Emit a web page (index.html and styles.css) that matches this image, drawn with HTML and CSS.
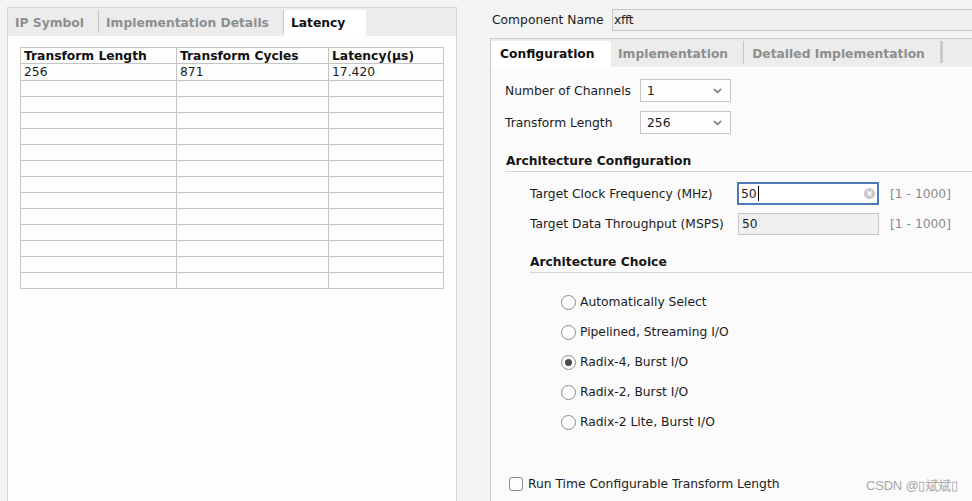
FILE: index.html
```html
<!DOCTYPE html>
<html>
<head>
<meta charset="utf-8">
<link rel="stylesheet" href="styles.css">
</head>
<body>
<div class="app">
  <section class="left-panel">
    <div class="tabbar">
      <div class="tab">IP Symbol</div><div class="sep"></div>
      <div class="tab">Implementation Details</div><div class="sep"></div>
      <div class="tab active">Latency</div>
    </div>
    <div class="left-content">
      <table class="latency">
        <colgroup><col class="c1"><col class="c2"><col class="c3"></colgroup>
        <thead>
          <tr><th>Transform Length</th><th>Transform Cycles</th><th>Latency(µs)</th></tr>
        </thead>
        <tbody>
          <tr class="data"><td>256</td><td>871</td><td>17.420</td></tr>
          <tr><td></td><td></td><td></td></tr>
          <tr><td></td><td></td><td></td></tr>
          <tr><td></td><td></td><td></td></tr>
          <tr><td></td><td></td><td></td></tr>
          <tr><td></td><td></td><td></td></tr>
          <tr><td></td><td></td><td></td></tr>
          <tr><td></td><td></td><td></td></tr>
          <tr><td></td><td></td><td></td></tr>
          <tr><td></td><td></td><td></td></tr>
          <tr><td></td><td></td><td></td></tr>
          <tr><td></td><td></td><td></td></tr>
          <tr><td></td><td></td><td></td></tr>
          <tr><td></td><td></td><td></td></tr>
        </tbody>
      </table>
    </div>
  </section>

  <section class="right">
    <div class="comp-row">
      <span class="comp-label">Component Name</span>
      <div class="name-input">xfft</div>
    </div>
    <div class="tabpane">
      <div class="tabbar rbar">
        <div class="tab active rfirst">Configuration</div>
        <div class="tab">Implementation</div><div class="sep"></div>
        <div class="tab">Detailed Implementation</div><div class="sep thick"></div>
      </div>
      <div class="config">
        <div class="field first">
          <span class="lbl">Number of Channels</span>
          <div class="combo"><span>1</span><svg class="chev" width="9" height="6" viewBox="0 0 9 6"><polyline points="1,1 4.5,4.5 8,1" fill="none" stroke="#707070" stroke-width="1.5"/></svg></div>
        </div>
        <div class="field second">
          <span class="lbl">Transform Length</span>
          <div class="combo"><span>256</span><svg class="chev" width="9" height="6" viewBox="0 0 9 6"><polyline points="1,1 4.5,4.5 8,1" fill="none" stroke="#707070" stroke-width="1.5"/></svg></div>
        </div>

        <div class="heading h1">Architecture Configuration</div>
        <div class="sub">
          <div class="field f3">
            <span class="lbl wide">Target Clock Frequency (MHz)</span>
            <div class="text-input focus"><span class="val">50</span><span class="caret"></span>
              <svg class="clear" width="11" height="11" viewBox="0 0 11 11"><circle cx="5.5" cy="5.5" r="5.5" fill="#c9c9c9"/><path d="M3.5 3.5 L7.5 7.5 M7.5 3.5 L3.5 7.5" stroke="#fff" stroke-width="1.4"/></svg>
            </div>
            <span class="range">[1 - 1000]</span>
          </div>
          <div class="field f4">
            <span class="lbl wide">Target Data Throughput (MSPS)</span>
            <div class="text-input disabled"><span class="val">50</span></div>
            <span class="range">[1 - 1000]</span>
          </div>

          <div class="heading h2">Architecture Choice</div>
          <div class="radios">
            <div class="radio"><span class="dot"></span>Automatically Select</div>
            <div class="radio"><span class="dot"></span>Pipelined, Streaming I/O</div>
            <div class="radio"><span class="dot on"></span>Radix-4, Burst I/O</div>
            <div class="radio"><span class="dot"></span>Radix-2, Burst I/O</div>
            <div class="radio"><span class="dot"></span>Radix-2 Lite, Burst I/O</div>
          </div>
        </div>

        <div class="check-row"><span class="box"></span>Run Time Configurable Transform Length</div>
      </div>
    </div>
  </section>

  <div class="watermark">CSDN @▯斌斌▯</div>
</div>
</body>
</html>
```

FILE: styles.css
```css
* { box-sizing: border-box; }
html, body { margin: 0; padding: 0; }
body {
  background: #f4f4f4;
  font-family: "DejaVu Sans", "Noto Sans CJK SC", sans-serif;
  font-size: 12.3px;
  color: #1c1c1c;
  width: 972px;
  height: 501px;
  overflow: hidden;
}
.app {
  position: relative;
  display: flex;
  align-items: flex-start;
  height: 501px;
  overflow: hidden;
}

/* ---------- tabs ---------- */
.tabbar {
  display: flex;
  align-items: flex-start;
  height: 28px;
  background: #ececec;
  white-space: nowrap;
}
.tab {
  height: 26px;
  margin-top: 2px;
  line-height: 26px;
  padding: 0 14px 0 7px;
  font-weight: bold;
  color: #8e8e8e;
  flex: none;
}
.tab.active {
  background: #ffffff;
  color: #111111;
  padding-right: 21px;
}
.sep {
  flex: none;
  width: 1px;
  height: 23px;
  margin-top: 2px;
  background: #c4c4c4;
}
.sep.thick {
  width: 3px;
  height: 22px;
  background: #c8c8c8;
}

/* ---------- left panel ---------- */
.left-panel {
  flex: none;
  margin: 7px 0 0 7px;
  width: 450px;
  height: 520px;
  border: 1px solid #d4d4d4;
  background: #fefefe;
}
.left-content {
  padding: 11px 0 0 12px;
}
.latency {
  border-collapse: collapse;
  table-layout: fixed;
  width: 423px;
  background: #fdfdfd;
}
.latency .c1 { width: 156px; }
.latency .c2 { width: 152px; }
.latency .c3 { width: 115px; }
.latency th,
.latency td {
  border: 1px solid #c4c4c4;
  padding: 0 3px;
  height: 16px;
  line-height: 14px;
  text-align: left;
  white-space: nowrap;
  overflow: hidden;
}
.latency th { font-weight: bold; color: #111; }
.latency tr.data td { height: 17px; }

/* ---------- right side ---------- */
.right {
  flex: none;
  width: 520px;
  margin-left: 33px;
  display: flex;
  flex-direction: column;
}
.comp-row {
  display: flex;
  align-items: center;
  margin-top: 9px;
  height: 22px;
}
.comp-label {
  width: 122px;
  padding-left: 2px;
  flex: none;
}
.name-input {
  flex: 1;
  height: 22px;
  line-height: 20px;
  background: #efefef;
  border: 1px solid #c6c6c6;
  padding-left: 1px;
  letter-spacing: -0.3px;
}
.tabpane {
  margin-top: 7px;
  border-top: 1px solid #cdcdcd;
  border-left: 1px solid #cdcdcd;
  height: 480px;
  background: #fbfbfb;
}
.rbar .tab { padding-right: 15px; }
.rbar .tab.rfirst {
  width: 120px;
  padding-left: 9px;
  height: 27px;
}
.rbar .tab.rfirst + .tab { padding-left: 7px; }
.rbar .sep + .tab { padding-left: 8px; }

.config {
  padding: 12px 0 0 14px;
}
.field {
  display: flex;
  align-items: center;
  height: 23px;
}
.field.second { margin-top: 9px; }
.lbl { width: 135px; flex: none; }
.lbl.wide { width: 207px; }
.combo {
  width: 91px;
  height: 23px;
  border: 1px solid #c6c6c6;
  background: #fdfdfd;
  display: flex;
  align-items: center;
  justify-content: space-between;
  padding: 0 8px 0 6px;
}
.chev { display: block; }

.heading {
  font-weight: bold;
  color: #161616;
  line-height: 19px;
  border-bottom: 1px solid #d6d6d6;
}
.h1 { margin-top: 18px; padding-left: 1px; }
.sub { padding-left: 25px; }
.f3 { margin-top: 10px; }
.f4 { margin-top: 8px; height: 22px; }
.text-input {
  width: 142px;
  height: 23px;
  display: flex;
  align-items: center;
  border: 1px solid #c6c6c6;
  background: #f0f0f0;
  padding-left: 3px;
}
.f4 .text-input { height: 22px; margin-left: 1px; width: 141px; }
.text-input.focus {
  border: 2px solid #4c7bb8;
  background: #ffffff;
  padding-left: 2px;
}
.caret {
  width: 1px;
  height: 15px;
  background: #000;
  margin-left: 1px;
}
.clear { margin-left: auto; margin-right: 2px; display: block; }
.range {
  margin-left: 11px;
  color: #8a8a8a;
}
.h2 { margin-top: 18px; }

.radios {
  margin-top: 14px;
  padding-left: 31px;
}
.radio {
  display: flex;
  align-items: center;
  height: 30px;
}
.dot {
  width: 15px;
  height: 15px;
  border-radius: 50%;
  border: 1px solid #8c8c8c;
  background: #fdfdfd;
  margin-right: 4px;
  display: flex;
  align-items: center;
  justify-content: center;
}
.dot.on::after {
  content: "";
  width: 7px;
  height: 7px;
  border-radius: 50%;
  background: #4a4a4a;
}

.check-row {
  margin-top: 37px;
  padding-left: 4px;
  height: 20px;
  display: flex;
  align-items: center;
}
.box {
  width: 14px;
  height: 14px;
  border: 1px solid #8a8a8a;
  border-radius: 3px;
  background: #fdfdfd;
  margin-right: 5px;
}

.watermark {
  position: absolute;
  left: 866px;
  top: 475px;
  font-family: "Liberation Sans", "Noto Sans CJK SC", sans-serif;
  font-size: 13px;
  letter-spacing: -0.2px;
  color: #a6a6a6;
  white-space: nowrap;
}
```
